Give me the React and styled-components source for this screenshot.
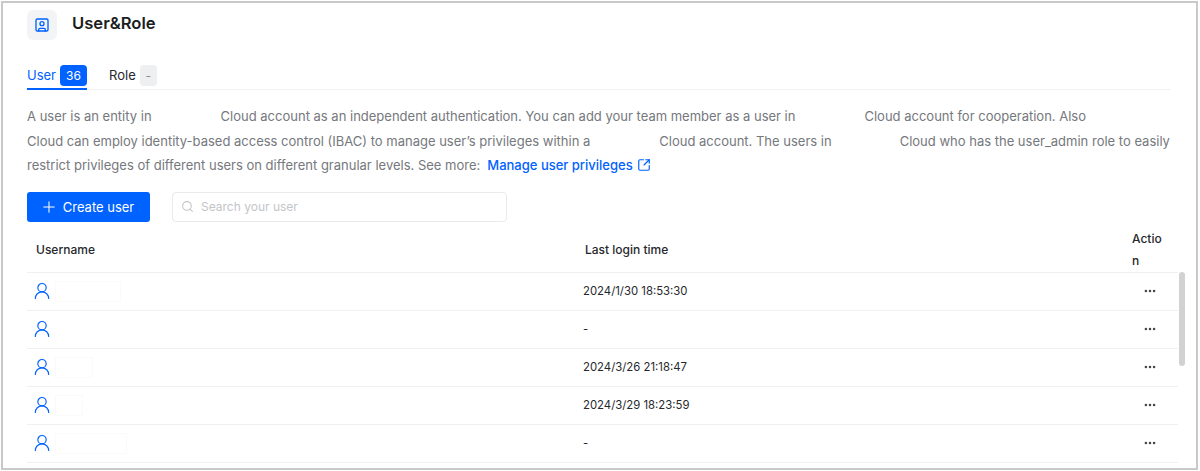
import React from "react";
import styled, { createGlobalStyle } from "styled-components";
import { Plus, Search, SquareArrowOutUpRight, SquareUser, UserRound, Ellipsis } from "lucide-react";

const Global = createGlobalStyle`
  html, body { margin: 0; padding: 0; background: #fff; }
  body { font-family: Inter, "Liberation Sans", sans-serif; overflow: hidden; }
`;

const Frame = styled.div`
  box-sizing: border-box;
  width: 1197px;
  height: 469px;
  margin: 1px 0 0 1px;
  border: 2px solid #c9c9c9;
  padding: 7px 0 0 24px;
  overflow: hidden;
  background: #fff;
`;

const Header = styled.div`
  display: flex;
  align-items: center;
  gap: 15px;
  height: 30px;
`;

const IconBox = styled.div`
  width: 30px;
  height: 30px;
  border-radius: 6px;
  background: #f3f4f5;
  color: #0062ff;
  display: flex;
  align-items: center;
  justify-content: center;
`;

const Title = styled.h1`
  margin: 0 0 4px;
  font-size: 16.6px;
  line-height: 24px;
  font-weight: 600;
  color: #1b1d21;
`;

const Tabs = styled.div`
  display: flex;
  gap: 22px;
  margin-top: 25px;
  width: 1144px;
  height: 24px;
  border-bottom: 1px solid #f1f2f3;
`;

const Tab = styled.div`
  display: flex;
  gap: 4px;
  box-sizing: border-box;
  height: 25px;
  font-size: 13px;
  line-height: 21px;
  color: ${(p) => (p.$active ? "#0062ff" : "#26282c")};
  border-bottom: ${(p) => (p.$active ? "2px solid #0062ff" : "none")};
`;

const Count = styled.span`
  height: 21px;
  min-width: ${(p) => (p.$active ? "27px" : "17px")};
  border-radius: 4px;
  text-align: center;
  font-size: 12px;
  line-height: 21px;
  background: ${(p) => (p.$active ? "#0062ff" : "#eeeff0")};
  color: ${(p) => (p.$active ? "#fff" : "#8a8d92")};
`;

const Intro = styled.div`
  margin-top: 14px;
  font-size: 13px;
  line-height: 24.5px;
  color: #75787d;
`;

const Line = styled.div`
  white-space: nowrap;
  height: 24.5px;
`;

const Hidden = styled.span`
  display: inline-block;
  width: ${(p) => p.$w}px;
`;

const DocLink = styled.a`
  display: inline-flex;
  align-items: center;
  gap: 4px;
  margin-left: 7px;
  color: #0062ff;
  font-weight: 500;
  vertical-align: top;
`;

const Toolbar = styled.div`
  display: flex;
  gap: 22px;
  margin-top: 14px;
`;

const CreateButton = styled.button`
  display: flex;
  align-items: center;
  justify-content: center;
  gap: 5px;
  width: 123px;
  height: 30px;
  padding: 0 3px 0 0;
  border: 0;
  border-radius: 3px;
  background: #0062ff;
  color: #fff;
  font: 400 13px Inter, sans-serif;
`;

const SearchBox = styled.div`
  box-sizing: border-box;
  display: flex;
  align-items: center;
  gap: 7px;
  width: 335px;
  height: 30px;
  padding-left: 8px;
  border: 1px solid #e9eaec;
  border-radius: 4px;
  color: #c3c5c9;
  font-size: 12px;
`;

const TableWrap = styled.div`
  position: relative;
  width: 1151px;
  margin-top: 6px;
`;

const Row = styled.div`
  display: grid;
  grid-template-columns: 556px 1fr 46px;
  align-items: center;
  box-sizing: border-box;
  height: ${(p) => (p.$head ? "45px" : "38px")};
  border-bottom: 1px solid #eef0f1;
  font-size: 11.35px;
  color: #26282c;
`;

const Name = styled.div`
  padding-left: 5px;
  display: flex;
  align-items: center;
  color: #0062ff;
`;

const NameMask = styled.span`
  width: ${(p) => p.$w}px;
  height: 19px;
  margin-left: 3px;
  border: 1px solid #fafafa;
`;

const HeadCell = styled.div`
  font-size: 12px;
  font-weight: 500;
  line-height: 22px;
  color: #26282c;
  margin-left: ${(p) => p.$pad || 0}px;
  word-break: break-all;
  width: ${(p) => (p.$narrow ? "31px" : "auto")};
`;

const ActionCell = styled.div`
  display: flex;
  padding-left: 11px;
  color: #45474b;
`;

const Scrollbar = styled.div`
  position: absolute;
  top: 44px;
  right: -7px;
  width: 6px;
  height: 94px;
  border-radius: 3px;
  background: #d2d2d2;
`;

const rows = [
  { time: "2024/1/30 18:53:30", mask: 64 },
  { time: "-", mask: 0 },
  { time: "2024/3/26 21:18:47", mask: 36 },
  { time: "2024/3/29 18:23:59", mask: 26 },
  { time: "-", mask: 70 },
];

export default function App() {
  return (
    <>
      <Global />
      <Frame>
        <Header>
          <IconBox><SquareUser size={16} strokeWidth={2} /></IconBox>
          <Title>User&amp;Role</Title>
        </Header>
        <Tabs>
          <Tab $active>User <Count $active>36</Count></Tab>
          <Tab>Role <Count>-</Count></Tab>
        </Tabs>
        <Intro>
          <Line>A user is an entity in<Hidden $w={69} />Cloud account as an independent authentication. You can add your team member as a user in<Hidden $w={69} />Cloud account for cooperation. Also</Line>
          <Line>Cloud can employ identity-based access control (IBAC) to manage user’s privileges within a<Hidden $w={69} />Cloud account. The users in<Hidden $w={68} />Cloud who has the user_admin role to easily</Line>
          <Line>restrict privileges of different users on different granular levels. See more:<DocLink>Manage user privileges <SquareArrowOutUpRight size={14} /></DocLink></Line>
        </Intro>
        <Toolbar>
          <CreateButton><Plus size={18} strokeWidth={1.4} />Create user</CreateButton>
          <SearchBox><Search size={13} />Search your user</SearchBox>
        </Toolbar>
        <TableWrap>
          <Row $head>
            <HeadCell $pad={9}>Username</HeadCell>
            <HeadCell $pad={2}>Last login time</HeadCell>
            <HeadCell $narrow>Action</HeadCell>
          </Row>
          {rows.map((row, i) => (
            <Row key={i}>
              <Name>
                <UserRound size={20} strokeWidth={1.4} />
                {row.mask > 0 && <NameMask $w={row.mask} />}
              </Name>
              <div>{row.time}</div>
              <ActionCell><Ellipsis size={14} strokeWidth={2.4} /></ActionCell>
            </Row>
          ))}
          <Scrollbar />
        </TableWrap>
      </Frame>
    </>
  );
}
